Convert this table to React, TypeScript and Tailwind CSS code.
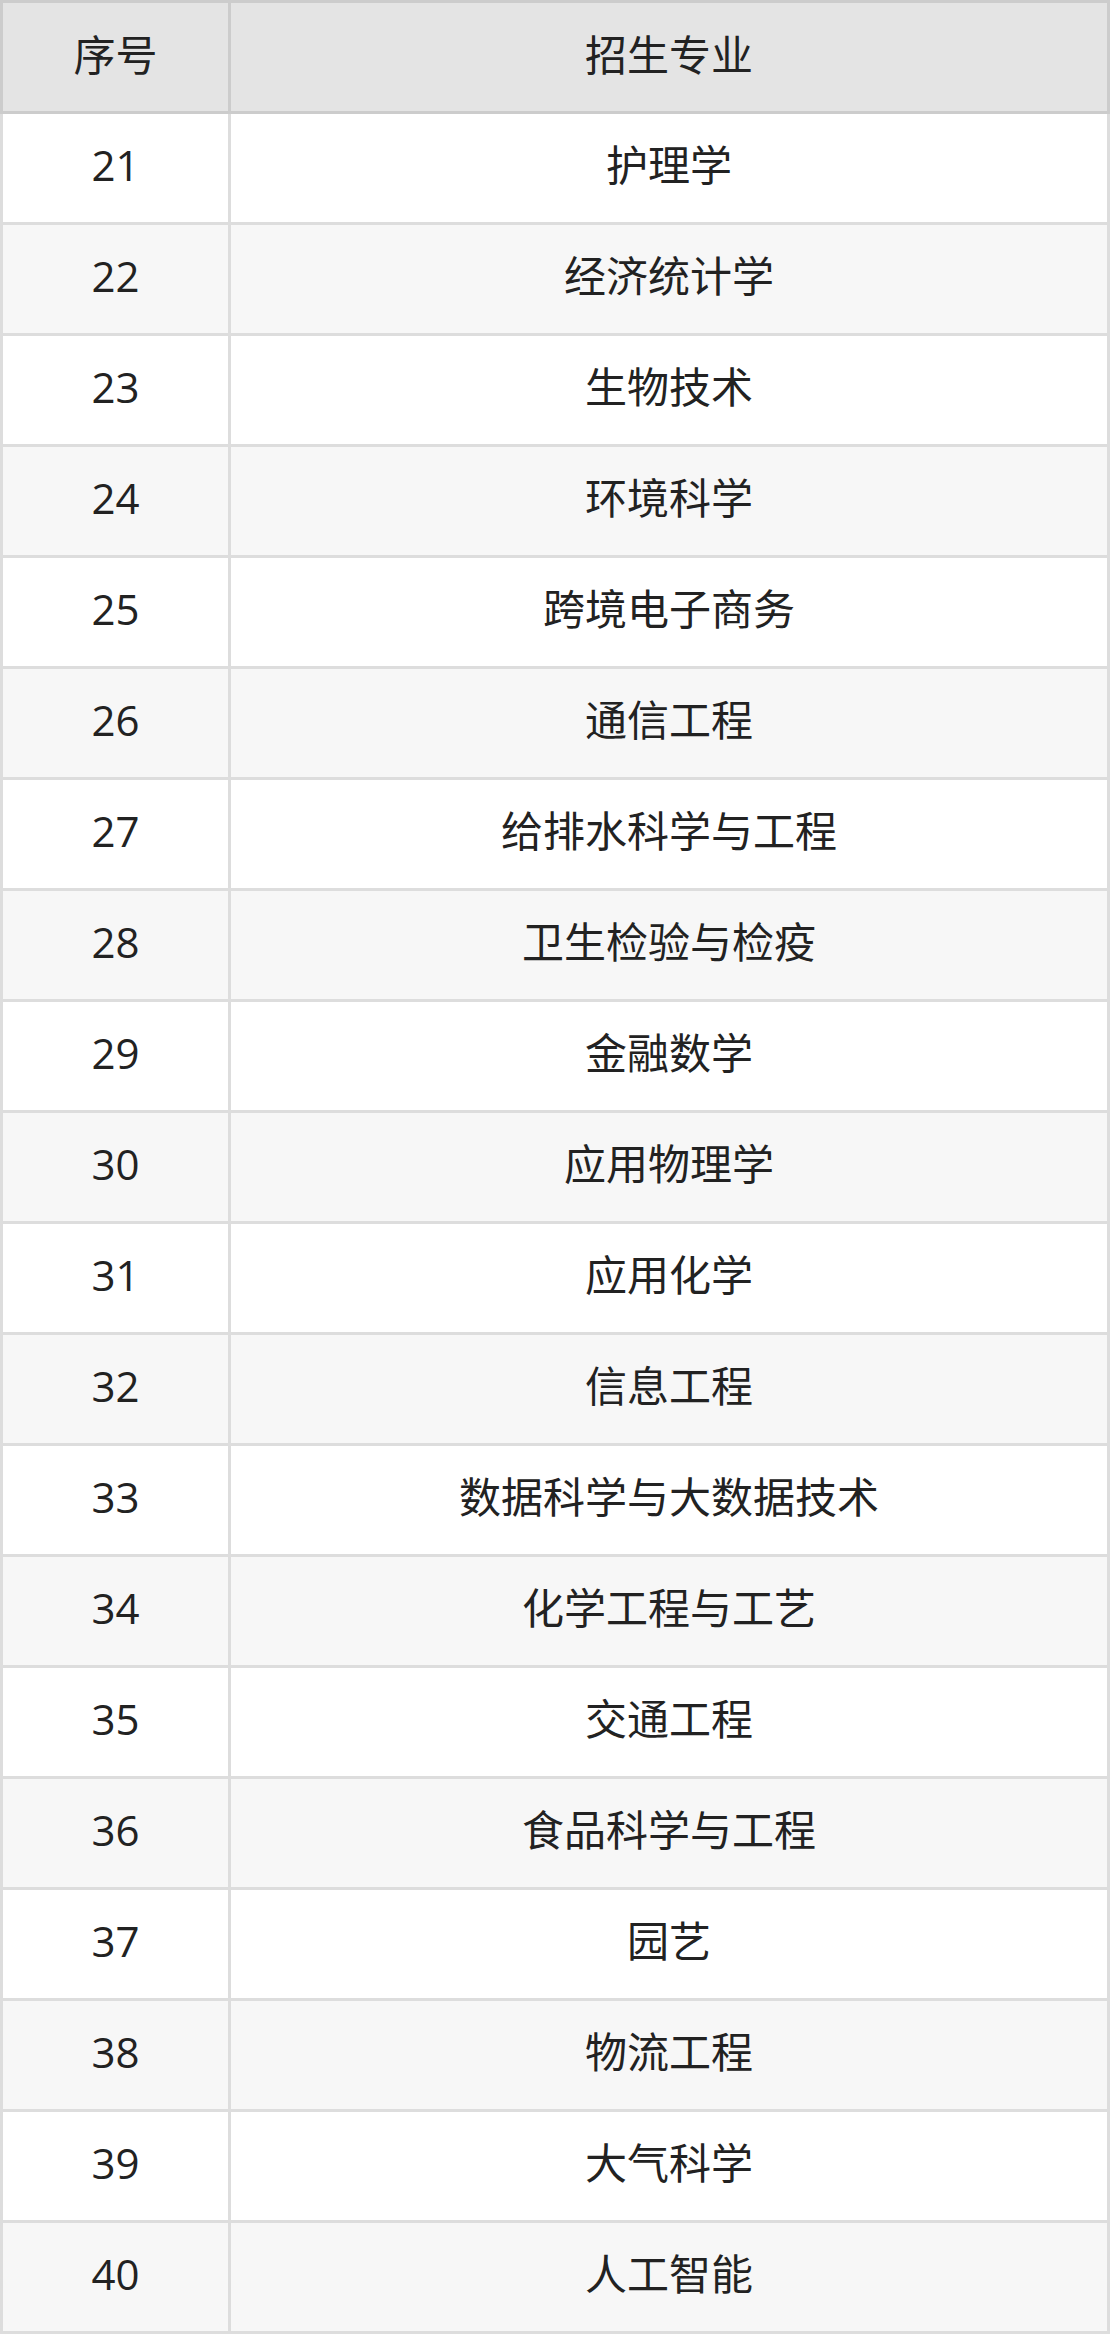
import React from "react";

const rows: [string, string][] = [
  ["21", "护理学"],
  ["22", "经济统计学"],
  ["23", "生物技术"],
  ["24", "环境科学"],
  ["25", "跨境电子商务"],
  ["26", "通信工程"],
  ["27", "给排水科学与工程"],
  ["28", "卫生检验与检疫"],
  ["29", "金融数学"],
  ["30", "应用物理学"],
  ["31", "应用化学"],
  ["32", "信息工程"],
  ["33", "数据科学与大数据技术"],
  ["34", "化学工程与工艺"],
  ["35", "交通工程"],
  ["36", "食品科学与工程"],
  ["37", "园艺"],
  ["38", "物流工程"],
  ["39", "大气科学"],
  ["40", "人工智能"],
];

export default function App() {
  return (
    <div
      className="w-[1110px] bg-white text-[#222222] text-[42px] leading-none"
      style={{ fontFamily: '"Open Sans", "Noto Sans CJK SC", sans-serif' }}
    >
      <div className="grid grid-cols-[231px_879px]">
        <div className="h-[114px] pb-[4px] flex items-center justify-center bg-[#e4e4e4] border-t-[3px] border-l-[3px] border-r-[3px] border-b-[3px] border-[#cccccc]">
          序号
        </div>
        <div className="h-[114px] pb-[4px] flex items-center justify-center bg-[#e4e4e4] border-t-[3px] border-r-[3px] border-b-[3px] border-[#cccccc]">
          招生专业
        </div>
        {rows.map(([n, name], i) => (
          <React.Fragment key={n}>
            <div
              className={`h-[111px] pb-[6px] flex items-center justify-center border-l-[3px] border-r-[3px] border-b-[3px] border-[#dddddd] ${
                i % 2 === 1 ? "bg-[#f7f7f7]" : "bg-white"
              }`}
            >
              {n}
            </div>
            <div
              className={`h-[111px] pb-[6px] flex items-center justify-center border-r-[3px] border-b-[3px] border-[#dddddd] ${
                i % 2 === 1 ? "bg-[#f7f7f7]" : "bg-white"
              }`}
            >
              {name}
            </div>
          </React.Fragment>
        ))}
      </div>
    </div>
  );
}
